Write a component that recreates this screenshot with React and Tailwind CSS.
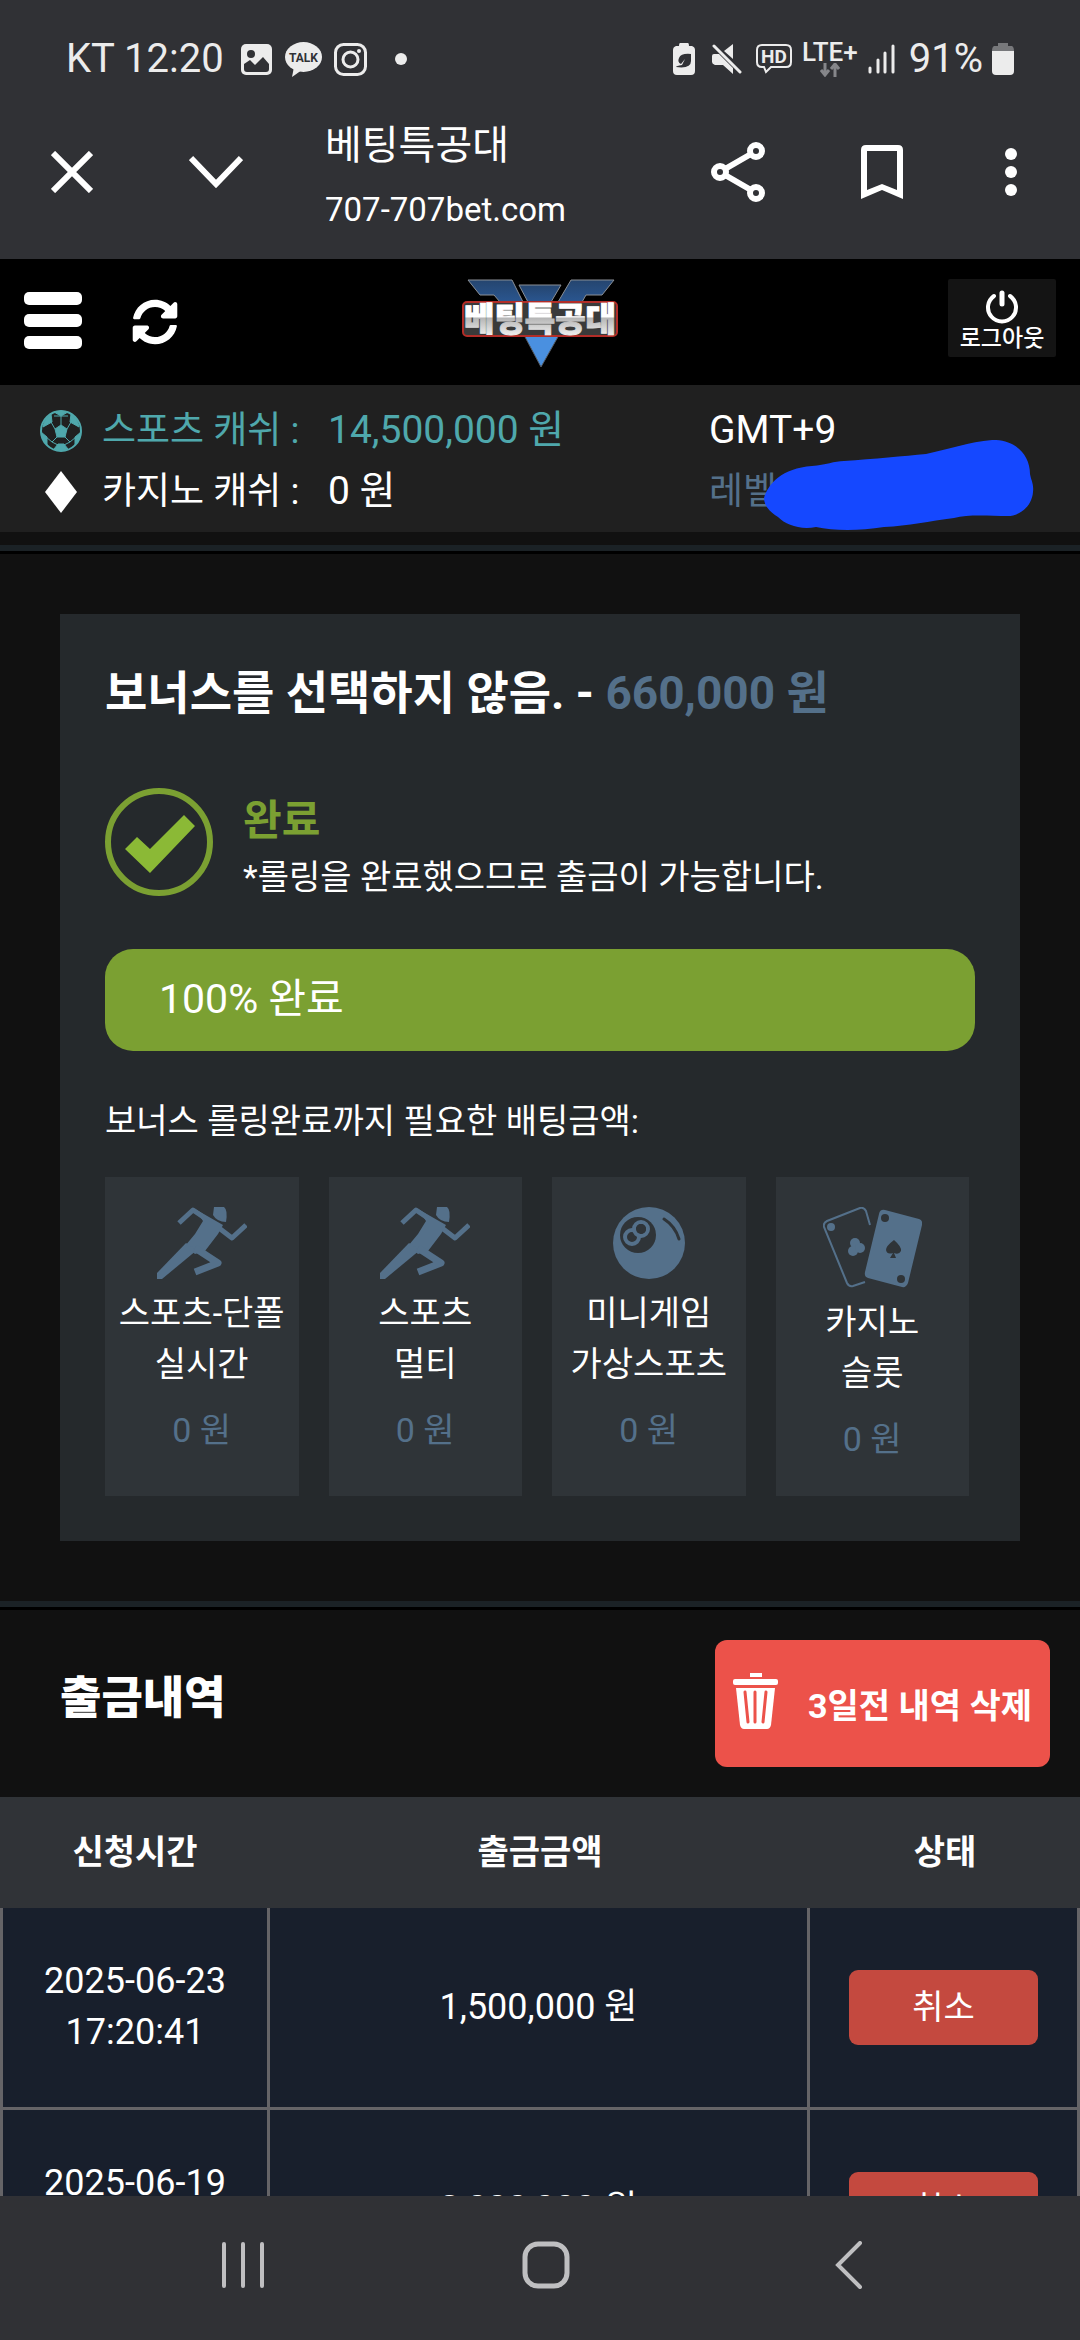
import React from "react";
import { FaSyncAlt } from "react-icons/fa";

const TILES = [
  { lines: ["스포츠-단폴", "실시간"], amount: "0 원", Icon: RunnerIcon },
  { lines: ["스포츠", "멀티"], amount: "0 원", Icon: RunnerIcon },
  { lines: ["미니게임", "가상스포츠"], amount: "0 원", Icon: EightBallIcon },
  { lines: ["카지노", "슬롯"], amount: "0 원", Icon: CardsIcon },
];

const WITHDRAWALS = [
  { date: "2025-06-23", time: "17:20:41", amount: "1,500,000 원" },
  { date: "2025-06-19", time: "", amount: "2,000,000 원" },
];

function RunnerIcon() {
  return (
    <svg viewBox="0 0 90 72" className="w-[90px] h-[72px]" fill="#54708a" stroke="#54708a">
      <path d="M57 0 H67 Q71 3 69 15 Q60 15 56 8 Z" stroke="none" />
      <path d="M22 16 L36 3 L58 18 L75 31 L89 18" fill="none" strokeWidth="5" strokeLinejoin="round" />
      <path d="M38 2 L66 18 L61 27 L48 44 L38 47 L28 39 L38 27 L46 14 Z" stroke="none" />
      <path d="M29 36 L0 66 V72 H5 L40 43 Z" stroke="none" />
      <path d="M38 41 L61 56 L38 65" fill="none" strokeWidth="7" strokeLinejoin="round" />
    </svg>
  );
}

function EightBallIcon() {
  return (
    <svg viewBox="0 0 72 72" className="w-[72px] h-[72px]" fill="none">
      <circle cx="36" cy="36" r="36" fill="#54708a" />
      <circle cx="25" cy="28" r="18" fill="#2f3438" />
      <circle cx="28" cy="22" r="7" stroke="#54708a" strokeWidth="4" />
      <circle cx="19" cy="30" r="7" stroke="#54708a" strokeWidth="4" />
      <circle cx="28" cy="22" r="5" fill="#2f3438" />
      <path d="M51 12 Q62 19 66 32" stroke="#2f3438" strokeWidth="3" strokeLinecap="round" />
    </svg>
  );
}

function CardsIcon() {
  return (
    <svg viewBox="0 0 99 81" className="w-[99px] h-[81px]" fill="#54708a">
      <path
        d="M47 18 L43 4 Q41 0 37 1 L4 14 Q0 16 1 20 L24 76 Q26 80 30 79 L42 75"
        fill="none"
        stroke="#54708a"
        strokeWidth="2"
      />
      <path d="M62 3 L96 12 Q100 13 99 18 L85 76 Q83 81 79 80 L45 71 Q41 70 42 65 L56 7 Q57 2 62 3 Z" />
      <circle cx="8" cy="20" r="4" />
      <circle cx="32" cy="36" r="5" />
      <circle cx="30" cy="44" r="5" />
      <circle cx="37" cy="41" r="5" />
      <g fill="#2f3438">
        <circle cx="62" cy="11" r="4" />
        <circle cx="78" cy="72" r="4" />
        <path d="M71 33 Q79 40 78 44 Q76 48 71 46 L73 51 H67 L70 46 Q64 48 63 43 Q63 39 71 33 Z" />
      </g>
    </svg>
  );
}

function SoccerIcon() {
  return (
    <svg viewBox="0 0 42 42" className="w-[42px] h-[42px]" fill="#4fa8ac" stroke="#4fa8ac">
      <circle cx="21" cy="21" r="20" fill="none" strokeWidth="2" />
      <path d="M21 15 L27 19 L25 27 H17 L15 19 Z" />
      <path d="M14 2 L21 6 L28 2 Q21 0 14 2 Z" />
      <path d="M31 4 L30 12 L39 17 Q38 9 31 4 Z" />
      <path d="M11 4 L12 12 L3 17 Q4 9 11 4 Z" />
      <path d="M41 22 L35 27 L35 35 Q41 28 41 22 Z" />
      <path d="M1 22 L7 27 L7 35 Q1 28 1 22 Z" />
      <path d="M14 39 L18 34 H24 L28 39 Q21 42 14 39 Z" />
      <path
        d="M21 15 V6 M27 19 L31 12 M15 19 L11 12 M25 27 L30 32 L24 35 M17 27 L12 32 L18 35 M30 32 L36 27 M12 32 L6 27 M14 6 H28"
        fill="none"
        strokeWidth="1"
      />
    </svg>
  );
}

function Logo() {
  return (
    <svg viewBox="0 0 158 90" className="w-[158px] h-[90px]" role="img" aria-label="베팅특공대">
      <defs>
        <linearGradient id="wing" x1="0" y1="0" x2="0" y2="1">
          <stop offset="0" stopColor="#25456f" />
          <stop offset="1" stopColor="#2a5690" />
        </linearGradient>
        <linearGradient id="letters" x1="0" y1="0" x2="0" y2="1">
          <stop offset="0.5" stopColor="#ffffff" />
          <stop offset="0.52" stopColor="#b5b5b5" />
          <stop offset="0.9" stopColor="#f2f2f2" />
        </linearGradient>
      </defs>
      <g fill="url(#wing)" stroke="#8a8f96" strokeWidth="1">
        <path d="M7 2 H51 L62 24 H39 L33 17 H19 Z" />
        <path d="M58 7 H100 L90 24 H67 Z" />
        <path d="M110 2 H153 L141 17 H125 L121 24 H97 Z" />
      </g>
      <path d="M63 57 H98 L80 89 Z" fill="#4a90e0" stroke="#555b63" strokeWidth="1" />
      <rect x="2" y="24" width="154" height="34" rx="4" fill="#3a3a3a" stroke="#b22d28" strokeWidth="2" />
      <text
        x="79"
        y="53"
        textAnchor="middle"
        fill="url(#letters)"
        stroke="url(#letters)"
        strokeWidth="1"
        className="font-['Noto_Sans_CJK_KR',sans-serif] text-[33px] font-black"
      >
        베팅특공대
      </text>
    </svg>
  );
}

function StatusBar() {
  return (
    <div className="flex h-[84px] items-center justify-between pt-[34px] pr-[66px] pl-[66px] text-[40px] leading-[50px] text-[#ececec]">
      <div className="flex items-center">
        <span>KT 12:20</span>
        <svg viewBox="0 0 31 31" className="ml-[17px] h-[31px] w-[31px]">
          <rect width="31" height="31" rx="5" fill="#ececec" />
          <circle cx="10" cy="10" r="4" fill="#303135" />
          <path d="M3 20 L9 16 L14 21 L22 13 L28 20 V25 Q28 28 25 28 H6 Q3 28 3 25 Z" fill="#303135" />
        </svg>
        <svg viewBox="0 0 37 35" className="ml-[13px] h-[35px] w-[37px]">
          <ellipse cx="18.5" cy="15" rx="18.5" ry="15" fill="#ececec" />
          <path d="M9 25 L7 35 L17 28 Z" fill="#ececec" />
          <text
            x="18.5"
            y="20"
            textAnchor="middle"
            fill="#303135"
            className="font-['Roboto',sans-serif] text-[12px] font-bold"
          >
            TALK
          </text>
        </svg>
        <svg viewBox="0 0 33 33" className="ml-[12px] h-[33px] w-[33px]" fill="none" stroke="#ececec" strokeWidth="3">
          <rect x="1.5" y="1.5" width="30" height="30" rx="8" />
          <circle cx="16.5" cy="16.5" r="7.5" />
          <circle cx="25" cy="8" r="2" fill="#ececec" stroke="none" />
        </svg>
        <span className="ml-[28px] h-[12px] w-[12px] rounded-full bg-[#ececec]" />
      </div>

      <div className="flex items-center">
        <svg viewBox="0 0 22 32" className="h-[32px] w-[22px]">
          <path d="M7 0 H15 Q16 0 16 3 H19 Q22 4 22 7 V28 Q22 32 18 32 H4 Q0 32 0 28 V7 Q0 4 3 3 H6 Q6 0 7 0 Z" fill="#ececec" />
          <path d="M18 11 Q8 10 6 15 Q4 19 8 21 L12 16 L9 22 Q3 23 3 24 Q18 26 18 18 Z" fill="#303135" />
        </svg>
        <svg viewBox="0 0 30 30" className="ml-[17px] h-[30px] w-[30px]" fill="#ececec">
          <path d="M0 12 Q0 10 2 10 H7 L21 24 V30 L11 21 H3 Q0 20 0 18 Z" />
          <path d="M12 7 L21 0 V15 Z" />
          <path d="M2 2 L28 28" stroke="#ececec" strokeWidth="3" strokeLinecap="round" />
        </svg>
        <svg viewBox="0 0 36 30" className="ml-[14px] h-[30px] w-[36px]" fill="none" stroke="#ececec" strokeWidth="2">
          <path d="M6 1 H30 Q35 1 35 6 V18 Q35 23 30 23 H15 L10 28 L8 23 H6 Q1 23 1 18 V6 Q1 1 6 1 Z" />
          <text
            x="18"
            y="19"
            textAnchor="middle"
            fill="#ececec"
            stroke="none"
            className="font-['Roboto',sans-serif] text-[19px] font-bold"
          >
            HD
          </text>
        </svg>
        <div className="ml-[10px] flex flex-col items-center">
          <span className="text-[26px] leading-[22px] font-medium">LTE+</span>
          <svg viewBox="0 0 20 14" className="h-[14px] w-[20px]" fill="none" stroke="#85868a" strokeWidth="3">
            <path d="M5 0 V11 M1 7 L5 12 L9 7 M15 14 V2 M11 6 L15 1 L19 6" />
          </svg>
        </div>
        <svg viewBox="0 0 27 30" className="ml-[10px] h-[30px] w-[27px]" stroke="#ececec" strokeWidth="3" strokeLinecap="round">
          <path d="M2 24 V28 M10 16 V28 M17 9 V28 M25 2 V28" />
        </svg>
        <span className="ml-[14px]">91%</span>
        <svg viewBox="0 0 22 32" className="ml-[9px] h-[32px] w-[22px]">
          <path d="M6 0 H16 V3 H20 Q22 4 22 8 H0 Q0 4 2 3 H6 Z" fill="#77787b" />
          <path d="M0 8 H22 V28 Q22 32 18 32 H4 Q0 32 0 28 Z" fill="#ececec" />
        </svg>
      </div>
    </div>
  );
}

function BrowserBar() {
  return (
    <div className="flex h-[175px] items-center pr-[63px] pl-[51px] text-white">
      <button type="button" aria-label="닫기">
        <svg viewBox="0 0 42 42" className="h-[42px] w-[42px]" stroke="currentColor" strokeWidth="6">
          <path d="M2 2 L40 40 M40 2 L2 40" />
        </svg>
      </button>
      <button type="button" aria-label="접기" className="ml-[96px]">
        <svg viewBox="0 0 54 34" className="h-[34px] w-[54px]" fill="none" stroke="currentColor" strokeWidth="6">
          <path d="M2 3 L27 29 L52 3" />
        </svg>
      </button>
      <div className="ml-[82px] flex-1 pt-[12px]">
        <div className="text-[40px] leading-[64px]">베팅특공대</div>
        <div className="text-[33px] leading-[64px]">707-707bet.com</div>
      </div>
      <button type="button" aria-label="공유">
        <svg viewBox="0 0 54 60" className="h-[60px] w-[54px]" fill="none" stroke="currentColor" strokeWidth="6">
          <circle cx="9" cy="30" r="6" />
          <circle cx="45" cy="9" r="6" />
          <circle cx="45" cy="51" r="6" />
          <path d="M14 27 L40 12 M14 33 L40 48" />
        </svg>
      </button>
      <button type="button" aria-label="북마크" className="ml-[96px]">
        <svg viewBox="0 0 42 54" className="h-[54px] w-[42px]" fill="currentColor">
          <path d="M5 0 H37 Q42 0 42 5 V54 L21 45 L0 54 V5 Q0 0 5 0 Z M6 6 V45 L21 39 L36 45 V6 Z" fillRule="evenodd" />
        </svg>
      </button>
      <button type="button" aria-label="더보기" className="ml-[102px]">
        <svg viewBox="0 0 12 48" className="h-[48px] w-[12px]" fill="currentColor">
          <circle cx="6" cy="6" r="6" />
          <circle cx="6" cy="24" r="6" />
          <circle cx="6" cy="42" r="6" />
        </svg>
      </button>
    </div>
  );
}

function SiteHeader() {
  return (
    <header className="flex h-[126px] items-center bg-black px-6 pb-1">
      <div className="flex flex-1 items-center gap-[50px]">
        <button type="button" aria-label="메뉴" className="flex w-[58px] flex-col gap-[9px]">
          <span className="h-[13px] rounded-[5px] bg-white" />
          <span className="h-[13px] rounded-[5px] bg-white" />
          <span className="h-[13px] rounded-[5px] bg-white" />
        </button>
        <button type="button" aria-label="새로고침" className="pt-1">
          <FaSyncAlt className="h-[46px] w-[46px] text-white" />
        </button>
      </div>
      <a href="#home" className="mt-[6px]">
        <Logo />
      </a>
      <div className="flex flex-1 justify-end pb-1">
        <button
          type="button"
          className="flex h-[78px] w-[108px] flex-col items-center rounded-[2px] bg-[#141414] pt-[11px] text-white"
        >
          <svg viewBox="0 0 34 34" className="h-[34px] w-[34px]" fill="none" stroke="currentColor" strokeWidth="4" strokeLinecap="round">
            <path d="M9 6 A14 14 0 1 0 25 6" />
            <path d="M17 3 V14" strokeWidth="5" />
          </svg>
          <span className="text-[23px] leading-[30px] font-medium">로그아웃</span>
        </button>
      </div>
    </header>
  );
}

function CashInfo() {
  return (
    <section className="flex h-[147px] bg-[#202020] pt-[15px] text-[39px] leading-[61px] text-white">
      <div className="flex-1 pl-[40px]">
        <div className="flex items-center text-[#4fa8ac]">
          <SoccerIcon />
          <span className="ml-[20px] w-[226px] text-[37px]">스포츠 캐쉬 :</span>
          <span>14,500,000 원</span>
        </div>
        <div className="flex items-center">
          <svg viewBox="0 0 42 42" className="h-[42px] w-[42px]" fill="white">
            <path d="M21 0 L37 21 L21 42 L5 21 Z" />
          </svg>
          <span className="ml-[20px] w-[226px] text-[37px]">카지노 캐쉬 :</span>
          <span>0 원</span>
        </div>
      </div>
      <div className="relative w-[371px]">
        <div>GMT+9</div>
        <div className="text-[37px] text-[#54708a]">레벨</div>
        {/* marker stroke drawn over the level value */}
        <svg viewBox="0 0 270 91" className="absolute top-[40px] left-[55px] h-[91px] w-[270px]" fill="#1548ff">
          <path d="M0 58 C4 44 18 28 48 26 C62 25 70 21 80 21 C110 19 140 16 162 14 C185 9 205 2 228 0 C250 -1 266 14 266 34 C267 40 270 44 269 52 C268 66 256 76 244 76 C225 76 205 74 190 78 C165 81 145 86 120 87 C95 91 70 91 52 87 C36 90 22 85 14 77 C6 72 0 66 0 58 Z" />
        </svg>
      </div>
    </section>
  );
}

function Divider() {
  return <div className="h-[9px] border-b-3 border-black bg-[#1b2226]" />;
}

function BonusCard() {
  return (
    <section className="mx-[60px] my-[60px] bg-[#25292c] px-[45px] pb-[45px] text-white">
      <h2 className="pt-[48px] text-[46px] leading-[62px] font-bold">
        보너스를 선택하지 않음. - <span className="text-[#54708a]">660,000 원</span>
      </h2>

      <div className="mt-[64px] flex h-[108px] gap-[30px]">
        <svg viewBox="0 0 108 108" className="h-[108px] w-[108px]" fill="#8bb936">
          <circle cx="54" cy="54" r="51" fill="none" stroke="#7ba032" strokeWidth="6" />
          <path d="M20 61 L32 49 L45 61 L79 27 L90 38 L45 85 Z" />
        </svg>
        <div className="pt-[4px]">
          <div className="text-[42px] leading-[58px] font-bold text-[#7ba032]">완료</div>
          <p className="text-[34px] leading-[54px]">*롤링을 완료했으므로 출금이 가능합니다.</p>
        </div>
      </div>

      <div className="mt-[53px] h-[102px] rounded-[28px] bg-[#7ba032] px-[54px] text-[41px] leading-[100px]">
        100% 완료
      </div>

      <p className="mt-[45px] text-[34px] leading-[51px]">보너스 롤링완료까지 필요한 배팅금액:</p>

      <ul className="mt-[30px] mr-[6px] grid grid-cols-4 gap-[30px]">
        {TILES.map(({ lines, amount, Icon }) => (
          <li
            key={lines.join()}
            className="flex h-[319px] flex-col items-center bg-[#2f3438] pt-[30px] text-[34px] leading-[51px]"
          >
            <Icon />
            <div className="mt-[9px] text-center whitespace-nowrap">
              {lines[0]}
              <br />
              {lines[1]}
            </div>
            <div className="mt-[15px] text-[#54708a]">{amount}</div>
          </li>
        ))}
      </ul>
    </section>
  );
}

function TrashIcon() {
  return (
    <svg viewBox="0 0 45 56" className="mb-[6px] h-[56px] w-[45px]" fill="white">
      <rect x="17" y="0" width="12" height="4" />
      <rect x="0" y="6" width="45" height="6" rx="2" />
      <path d="M3 15 H42 L38 52 Q37 56 34 56 H11 Q8 56 7 52 Z" />
      <path d="M12 19 L15 49 M22 19 V49 M33 19 L30 49" stroke="#ec524a" strokeWidth="3" strokeLinecap="round" />
    </svg>
  );
}

function Withdrawals() {
  return (
    <section className="text-white">
      <div className="flex h-[187px] items-center justify-between pr-[30px] pl-[60px]">
        <h2 className="pb-[10px] text-[45px] leading-[62px] font-black">출금내역</h2>
        <button
          type="button"
          className="flex h-[127px] w-[335px] items-center gap-[30px] rounded-[12px] bg-[#ec524a] pl-[18px] text-[34px] font-bold whitespace-nowrap"
        >
          <TrashIcon />
          <span className="pt-[6px]">3일전 내역 삭제</span>
        </button>
      </div>

      <table className="w-full table-fixed border-separate border-spacing-0 text-center">
        <thead>
          <tr className="h-[111px] bg-[#303337] text-[34px]">
            <th className="w-1/4 font-bold">신청시간</th>
            <th className="w-1/2 font-bold">출금금액</th>
            <th className="w-1/4 font-bold">상태</th>
          </tr>
        </thead>
        <tbody>
          {WITHDRAWALS.map((row) => (
            <tr key={row.date} className="h-[202px] bg-[#181f2c] text-[36px] leading-[51px]">
              <td className="border-r-3 border-b-3 border-l-3 border-[#656467] pb-[2px]">
                <span className="block h-[51px]">{row.date}</span>
                <span className="block h-[51px]">{row.time}</span>
              </td>
              <td className="border-r-3 border-b-3 border-[#656467]">{row.amount}</td>
              <td className="border-r-3 border-b-3 border-[#656467]">
                <button type="button" className="h-[75px] w-[189px] rounded-[9px] bg-[#c4493f] align-middle text-[34px]">
                  취소
                </button>
              </td>
            </tr>
          ))}
        </tbody>
      </table>
    </section>
  );
}

function NavBar() {
  return (
    <nav className="grid h-[144px] shrink-0 grid-cols-3 items-center justify-items-center bg-[#303135] pr-[80px] pb-[6px] pl-[92px] text-[#bfbfc1]">
      <button type="button" aria-label="최근 앱">
        <svg viewBox="0 0 44 48" className="h-[48px] w-[44px]" stroke="currentColor" strokeWidth="4" strokeLinecap="round">
          <path d="M3 3 V45 M22 3 V45 M41 3 V45" />
        </svg>
      </button>
      <button type="button" aria-label="홈">
        <svg viewBox="0 0 48 48" className="h-[48px] w-[48px]" fill="none" stroke="currentColor" strokeWidth="5">
          <rect x="3" y="3" width="42" height="42" rx="13" />
        </svg>
      </button>
      <button type="button" aria-label="뒤로">
        <svg viewBox="0 0 28 48" className="h-[48px] w-[28px]" fill="none" stroke="currentColor" strokeWidth="4" strokeLinecap="round">
          <path d="M25 2 L3 24 L25 46" />
        </svg>
      </button>
    </nav>
  );
}

export default function App() {
  return (
    <div className="flex h-screen flex-col overflow-hidden bg-[#111111] font-['Roboto','Noto_Sans_CJK_KR',sans-serif]">
      <div className="shrink-0 bg-[#303135]">
        <StatusBar />
        <BrowserBar />
      </div>
      <main className="min-h-0 flex-1 overflow-hidden">
        <SiteHeader />
        <CashInfo />
        <div className="h-[13px]" />
        <Divider />
        <BonusCard />
        <Divider />
        <Withdrawals />
      </main>
      <NavBar />
    </div>
  );
}
